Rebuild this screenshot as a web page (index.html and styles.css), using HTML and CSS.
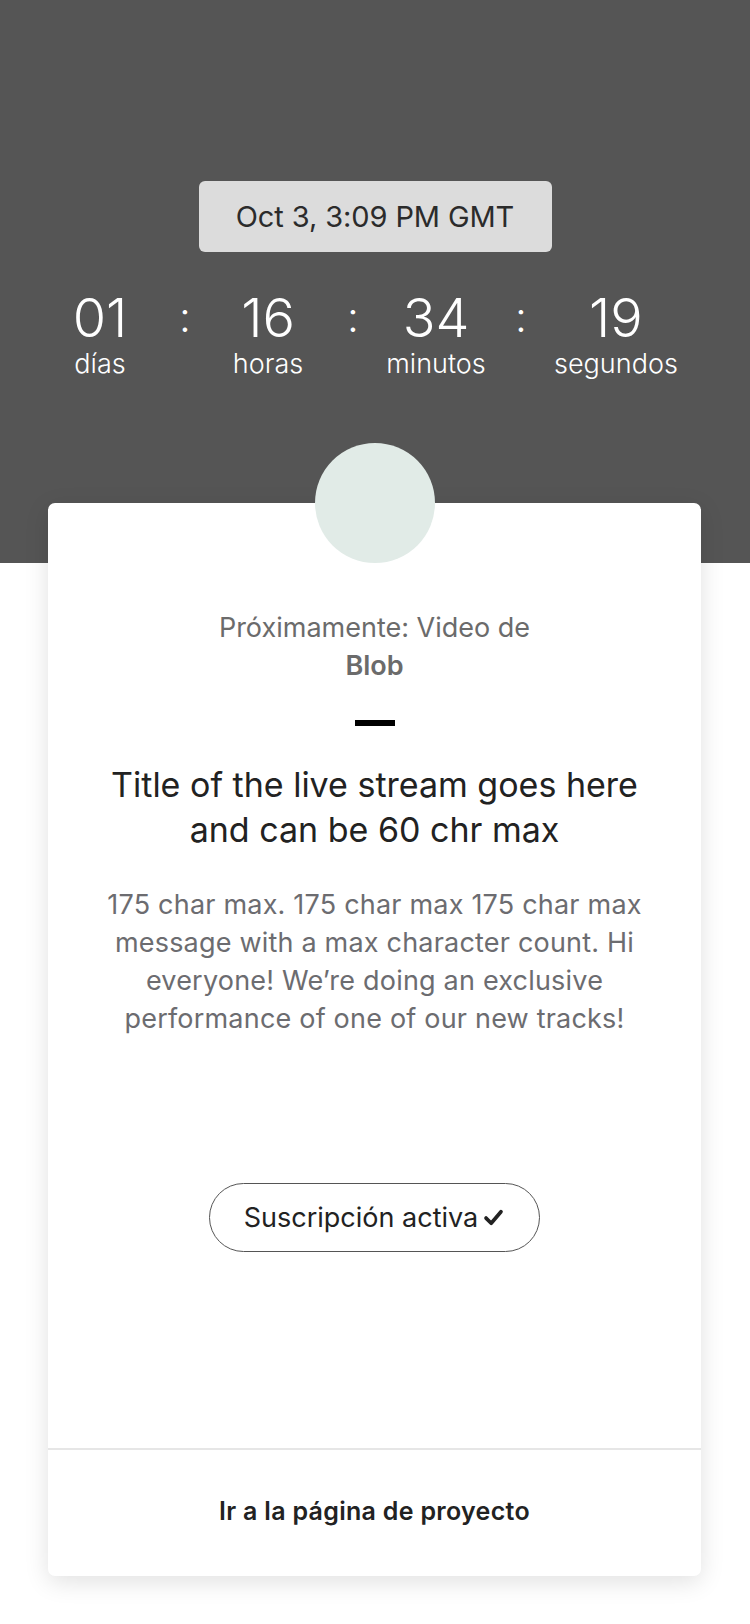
FILE: index.html
```html
<!DOCTYPE html>
<html lang="es">
<head>
<meta charset="utf-8">
<title>Próximamente</title>
<link rel="stylesheet" href="styles.css">
</head>
<body>
<header class="hero">
  <div class="date-pill">Oct 3, 3:09 PM GMT</div>
  <div class="countdown">
    <div class="unit"><span class="num">01</span><span class="lbl">días</span></div>
    <span class="colon">:</span>
    <div class="unit"><span class="num">16</span><span class="lbl">horas</span></div>
    <span class="colon">:</span>
    <div class="unit"><span class="num">34</span><span class="lbl">minutos</span></div>
    <span class="colon">:</span>
    <div class="unit"><span class="num">19</span><span class="lbl">segundos</span></div>
  </div>
</header>
<main class="card">
  <div class="card-body">
    <div class="avatar"></div>
    <p class="upcoming">Próximamente: Video de<br><strong>Blob</strong></p>
    <div class="dash"></div>
    <h1 class="title">Title of the live stream goes here and can be 60 chr max</h1>
    <p class="desc">175 char max. 175 char max 175 char max message with a max character count. Hi everyone! We’re doing an exclusive performance of one of our new tracks!</p>
    <button class="sub-btn">Suscripción activa<svg class="check" viewBox="0 0 20 20" width="23" height="23"><path d="M3.5 10.5 L8 15 L16.5 5" fill="none" stroke="#222" stroke-width="3.2" stroke-linecap="round" stroke-linejoin="round"/></svg></button>
  </div>
  <a class="footer-link" href="#">Ir a la página de proyecto</a>
</main>
</body>
</html>
```

FILE: styles.css
```css
* { box-sizing: border-box; }
html, body { margin: 0; padding: 0; }
body {
  background: #ffffff;
  font-family: Inter, "Noto Sans", "Liberation Sans", sans-serif;
  width: 750px;
  min-height: 1624px;
}
.hero {
  background: #555555;
  height: 563px;
  padding-top: 181px;
  display: flex;
  flex-direction: column;
  align-items: center;
}
.date-pill {
  width: 353px;
  height: 71px;
  background: #dcdcdc;
  border-radius: 6px;
  display: flex;
  align-items: center;
  justify-content: center;
  color: #2b2b2b;
  font-size: 29px;
  letter-spacing: -0.1px;
}
.countdown {
  align-self: stretch;
  display: flex;
  align-items: flex-start;
  padding-left: 50px;
  margin-top: 36px;
  color: #ffffff;
}
.unit {
  min-width: 100px;
  display: flex;
  flex-direction: column;
  align-items: center;
}
.num {
  font-size: 54px;
  font-weight: 300;
  line-height: 60px;
}
.lbl {
  font-size: 27px;
  font-weight: 300;
  line-height: 32px;
  margin-top: 0;
}
.colon {
  width: 10px;
  margin: 0 29px;
  text-align: center;
  font-size: 42px;
  font-weight: 300;
  line-height: 58px;
}
.card {
  width: 653px;
  margin: -60px 0 0 48px;
  background: #ffffff;
  border-radius: 7px;
  box-shadow: 0 6px 24px rgba(0, 0, 0, 0.12);
  display: flex;
  flex-direction: column;
}
.card-body {
  display: flex;
  flex-direction: column;
  align-items: center;
  padding: 0 30px 196px;
}
.avatar {
  width: 120px;
  height: 120px;
  border-radius: 50%;
  background: #e1ebe7;
  margin-top: -60px;
}
.upcoming {
  margin: 46px 0 0;
  text-align: center;
  color: #6b6b6b;
  font-size: 27px;
  line-height: 38px;
}
.upcoming strong { font-weight: 600; }
.dash {
  width: 40px;
  height: 6px;
  background: #000;
  margin-top: 35px;
}
.title {
  margin: 36px 0 0;
  text-align: center;
  font-size: 34px;
  font-weight: 400;
  line-height: 45px;
  color: #222;
  max-width: 570px;
}
.desc {
  margin: 34px 0 0;
  text-align: center;
  font-size: 27px;
  letter-spacing: 0.2px;
  line-height: 38px;
  color: #6c6c70;
  max-width: 570px;
}
.sub-btn {
  margin-top: 145px;
  width: 331px;
  height: 69px;
  border: 1.5px solid #555;
  border-radius: 35px;
  background: #fff;
  font-family: inherit;
  font-size: 27px;
  color: #222;
  display: flex;
  align-items: center;
  justify-content: center;
  gap: 4px;
  padding: 0;
}
.check { display: block; }
.footer-link {
  border-top: 2px solid #e6e6e6;
  height: 128px;
  padding-bottom: 4px;
  display: flex;
  align-items: center;
  justify-content: center;
  font-size: 25px;
  font-weight: 600;
  letter-spacing: 0.3px;
  color: #222;
  text-decoration: none;
}
```
